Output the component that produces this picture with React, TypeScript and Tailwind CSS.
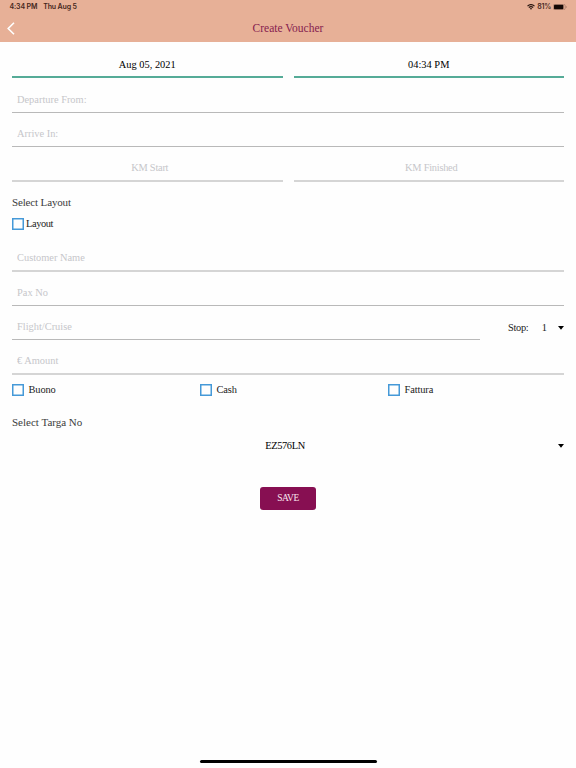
import { ReactNode } from 'react';
import clsx from 'clsx';

interface FieldProps {
  label: string;
  center?: boolean;
  className?: string;
}

const payments = ['Buono', 'Cash', 'Fattura'];

function Field({ label, center = false, className }: FieldProps) {
  return (
    <div className={clsx('flex items-end border-b pr-[5px] pb-1', center ? 'pl-[10px]' : 'pl-[5px]', className)}>
      <input
        aria-label={label}
        placeholder={label}
        className={clsx(
          'w-full h-4 leading-4 bg-transparent outline-none placeholder:text-[#c6c6ca]',
          center && 'text-center tracking-[-0.25px]'
        )}
      />
    </div>
  );
}

function PickerField({ children }: { children: ReactNode }) {
  return (
    <div className="flex-1 h-9 flex items-end justify-center border-b-2 border-[#55ab97] pb-[3px] leading-4 text-black">
      {children}
    </div>
  );
}

function CheckItem({ label, className }: { label: string; className?: string }) {
  return (
    <label className={clsx('flex items-center h-4 leading-4 text-[#222]', className)}>
      <input
        type="checkbox"
        className="appearance-none size-[11.5px] shrink-0 shadow-[inset_0_0_0_1.5px_#4599d8]"
      />
      <span>{label}</span>
    </label>
  );
}

function Caret() {
  return (
    <svg width="6" height="4" viewBox="0 0 6 4" className="shrink-0">
      <path d="M0 0H6L3 3.8Z" fill="#000" />
    </svg>
  );
}

function StatusBar() {
  return (
    <div className="h-[14px] flex items-center justify-between pl-[9.5px] pr-[9px] font-['Inter','Liberation_Sans',sans-serif] text-[7px] font-semibold text-[#44261c]">
      <div className="flex gap-[6px] tracking-[-0.15px]">
        <span>4:34 PM</span>
        <span>Thu Aug 5</span>
      </div>
      <div className="flex items-center gap-[2px]">
        <svg width="8" height="6" viewBox="0 0 8 6">
          <path d="M0.5 2.1Q4 -0.9 7.5 2.1" fill="none" stroke="#2b1710" strokeWidth="1.2" />
          <path d="M1.8 3.5Q4 1.7 6.2 3.5" fill="none" stroke="#2b1710" strokeWidth="1.1" />
          <path d="M2.8 4.5Q4 3.6 5.2 4.5L4 5.8Z" fill="#2b1710" />
        </svg>
        <span className="tracking-[-0.2px]">81%</span>
        <svg width="14" height="6" viewBox="0 0 14 6">
          <rect x="0.3" y="0.3" width="11.9" height="5.4" rx="1.5" fill="none" stroke="#987060" strokeWidth="0.6" />
          <rect x="1" y="0.8" width="9.4" height="4.4" rx="0.8" fill="#140805" />
          <path d="M12.9 2V4Q13.7 3.6 13.7 3T12.9 2Z" fill="#987060" />
        </svg>
      </div>
    </div>
  );
}

export default function App() {
  return (
    <div className="w-[576px] h-[768px] flex flex-col bg-[#fefefe] overflow-hidden font-['Liberation_Serif',serif] text-[10.4px]">
      <header className="h-[42px] bg-[#e7b097]">
        <StatusBar />
        <div className="grid grid-cols-[1fr_auto_1fr] items-center h-7">
          <button aria-label="Back" className="pl-[7px]">
            <svg width="8" height="13" viewBox="0 0 8 13">
              <path d="M7 0.7L1.2 6.5L7 12.3" fill="none" stroke="#fff" strokeWidth="1.6" />
            </svg>
          </button>
          <h1 className="text-[11.5px] leading-4 text-[#86204f]">Create Voucher</h1>
        </div>
      </header>

      <main className="flex-1 flex flex-col px-3">
        <div className="flex gap-[11px]">
          <PickerField>Aug 05, 2021</PickerField>
          <PickerField>04:34 PM</PickerField>
        </div>
        <Field label="Departure From:" className="h-[35px] border-[#b9b9b9]" />
        <Field label="Arrive In:" className="h-[34px] border-[#b9b9b9]" />
        <div className="flex gap-[11px]">
          <Field label="KM Start" center className="flex-1 h-[35px] border-b-2 border-[#d5d5d5]" />
          <Field label="KM Finished" center className="flex-1 h-[35px] border-b-2 border-[#d5d5d5]" />
        </div>

        <h2 className="mt-3 text-[11px] leading-4 tracking-[-0.15px] text-[#3c3c3c]">Select Layout</h2>
        <CheckItem label="Layout" className="mt-[6px] gap-[2.5px] tracking-[-0.4px]" />

        <Field label="Customer Name" className="h-10 border-b-2 border-[#d5d5d5]" />
        <Field label="Pax No" className="h-[34px] border-[#b9b9b9]" />
        <div className="flex h-[34px]">
          <Field label="Flight/Cruise" className="w-[468px] border-[#b9b9b9]" />
          <div className="flex-1 flex items-center pt-[10px] pl-7 leading-4 text-[#222]">
            <span className="tracking-[-0.3px]">Stop:</span>
            <span className="ml-auto mr-[11px]">1</span>
            <Caret />
          </div>
        </div>
        <Field label="€ Amount" className="h-[35px] border-b-2 border-[#d5d5d5]" />

        <div className="grid grid-cols-[188px_188px_1fr] mt-[7px]">
          {payments.map((name) => (
            <CheckItem key={name} label={name} className="gap-[5px] tracking-[-0.1px]" />
          ))}
        </div>

        <h2 className="mt-4 text-[11px] leading-4 text-[#3c3c3c]">Select Targa No</h2>
        <div className="mt-2 flex items-center leading-4 text-black">
          <span className="flex-1 text-center tracking-[-0.35px]">EZ576LN</span>
          <Caret />
        </div>

        <button className="mt-[33px] w-14 h-[23px] self-center rounded-[3px] bg-[#870f52] text-[9.5px] tracking-[-0.5px] text-[#f8e5ef]">
          SAVE
        </button>
      </main>

      <footer className="h-2 flex justify-center">
        <div className="w-[177px] h-[3px] rounded-full bg-black" />
      </footer>
    </div>
  );
}
